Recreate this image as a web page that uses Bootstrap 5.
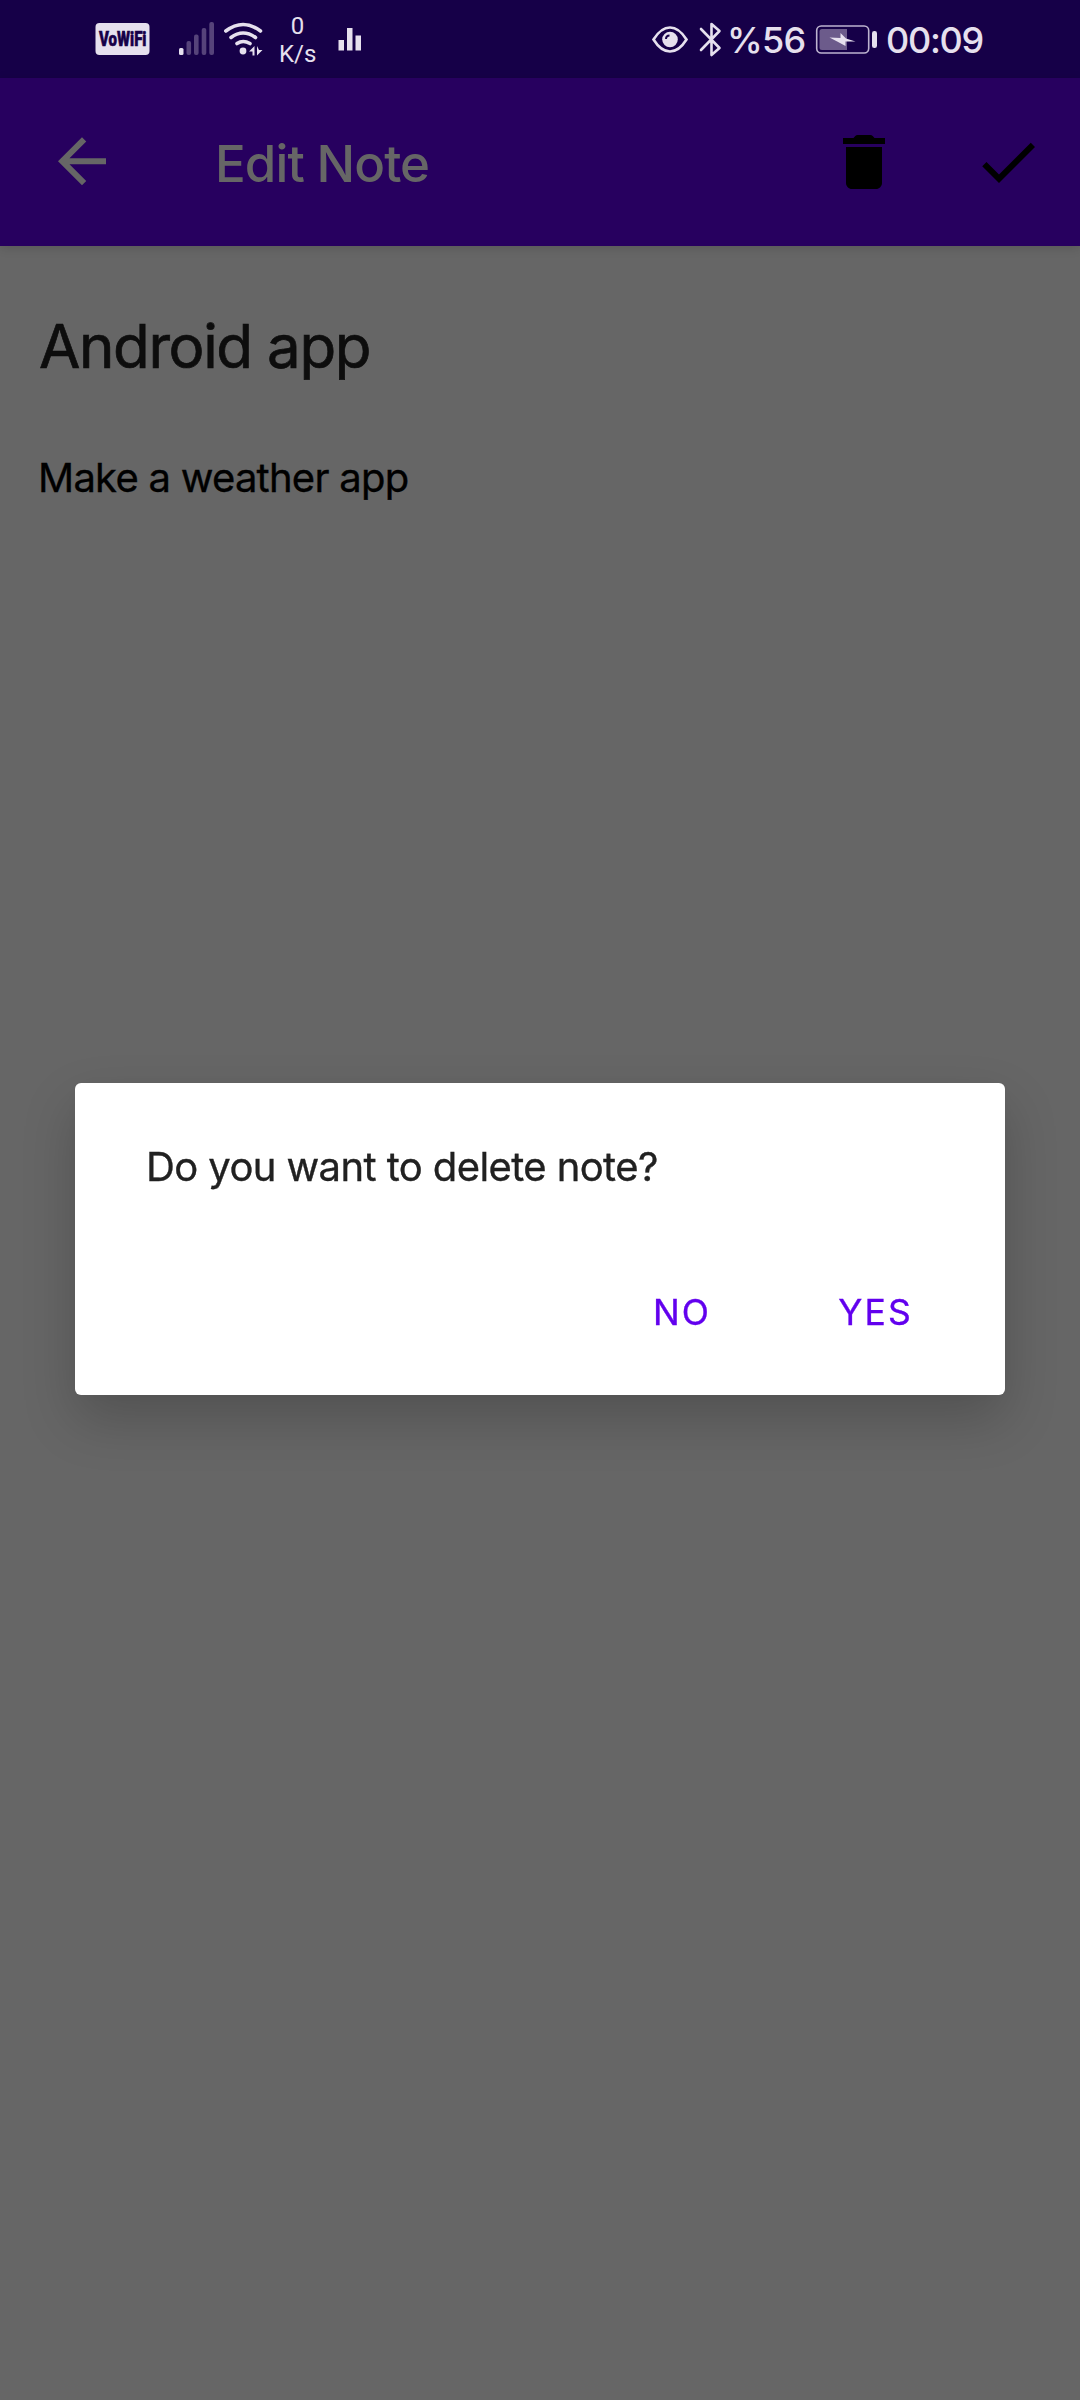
<!DOCTYPE html>
<html lang="en">
<head>
<meta charset="utf-8">
<meta name="viewport" content="width=device-width, initial-scale=1">
<title>Edit Note</title>
<link href="https://cdn.jsdelivr.net/npm/bootstrap@5.3.0/dist/css/bootstrap.min.css" rel="stylesheet">
<style>
  body { font-family: Inter, "Liberation Sans", sans-serif; background: #666; color: #000; height: 2400px; overflow: hidden; }
  .status-bar { height: 78px; background: #160048; color: #e6e0ee; padding: 0 96px 0 95px; }
  .status-bar svg { flex: none; display: block; overflow: visible; }
  .status-text { font-size: 36px; line-height: 78px; white-space: nowrap; font-weight: 500; letter-spacing: -.8px; padding-top: 1px; height: 78px; }
  .battery-level { width: 79px; }
  .clock { width: 98px; letter-spacing: -1.3px; }
  .net-speed { font: 24px/28px Roboto, sans-serif; width: 37px; margin: 2px 4px 0 13px; }
  .app-bar { height: 168px; background: #27005f; box-shadow: 0 2px 10px rgba(0,0,0,.14); padding: 0 36px 0 46px; }
  .app-title { font-size: 51px; line-height: 60px; color: #666; font-weight: 500; letter-spacing: -.9px; margin: 4px 0 0 97px; }
  .icon-btn { width: 72px; height: 72px; border: 0; background: none; color: #000; }
  .bar-actions { gap: 72px; }
  .note-pane { padding: 60px 38px; }
  .note-title { font-size: 60px; line-height: 80px; color: #0d0d0d; margin: 0 0 0 1px; font-weight: 400; letter-spacing: -1.4px; -webkit-text-stroke: .7px #0d0d0d; }
  .note-body { font-size: 40px; line-height: 60px; margin: 62px 0 0; letter-spacing: -.75px; -webkit-text-stroke: .35px #000; }
  .confirm-dialog { --bs-modal-width: 930px; --bs-modal-margin: 0; max-width: 930px; height: 100%; padding-top: 78px; }
  .confirm-dialog .modal-content { height: 312px; border: 0; border-radius: 6px; color: #212121; box-shadow: 0 24px 54px rgba(0,0,0,.2), 0 0 18px rgba(0,0,0,.03); }
  .confirm-text { font-size: 40px; line-height: 60px; padding: 54px 71px 0; letter-spacing: -.6px; -webkit-text-stroke: .35px #212121; }
  .dialog-actions { margin-top: 86px; padding-right: 92px; gap: 127px; }
  .dialog-action, .dialog-action:hover { font-size: 35.5px; line-height: 60px; color: #6200ee; letter-spacing: 2.2px; border: 0; padding: 0; -webkit-text-stroke: .35px #6200ee; }
</style>
</head>
<body>
<header>
  <div class="status-bar d-flex align-items-center justify-content-between">
    <div class="d-flex align-items-center">
      <svg width="55" height="78" viewBox="95 0 55 78"><rect x="95.500" y="23" width="54" height="32" rx="4" fill="#e6e0ee"/><text x="99" y="46" textLength="47.500" lengthAdjust="spacingAndGlyphs" font-family="Roboto, sans-serif" font-weight="900" font-size="20.500" fill="#160048" stroke="#160048" stroke-width=".6">VoWiFi</text></svg>
      <svg width="116" height="78" viewBox="150 0 116 78" fill="#e6e0ee">
        <rect x="179" y="48" width="4.500" height="7" rx="1.500"/>
        <g fill="#56437a"><rect x="186.500" y="41" width="4.600" height="14" rx="2"/><rect x="194" y="34.500" width="4.600" height="20.500" rx="2"/><rect x="201.700" y="28" width="4.600" height="27" rx="2"/><rect x="209.300" y="22" width="4.700" height="33" rx="2"/></g>
        <g fill="none" stroke="#e6e0ee" stroke-width="3.600" stroke-linecap="round"><path d="M225.800 31Q243 18 260.500 31M231 37.500Q243 28.500 255.500 37.500M237 43.500Q243 39.500 250 43.500"/></g>
        <circle cx="243" cy="51" r="3.400"/><path d="M249 51.500l5.500-5.500v9.500h-2v-4zM257 46v9.500l5.500-5.500h-3.500z"/>
      </svg>
      <div class="net-speed text-center"><div>0</div><div>K/s</div></div>
      <svg width="42" height="78" viewBox="320 0 42 78" fill="#e6e0ee"><path d="M338.500 40h5.500v10.500h-5.500zM347 28h5.500v22.500H347zM355.500 35.500h5.500v15h-5.500z"/></svg>
    </div>
    <div class="d-flex align-items-center">
      <svg width="76" height="78" viewBox="651 0 76 78" fill="none" stroke="#e6e0ee">
        <path d="M653.500 39.500Q661 27.500 670 27.500T686.500 39.500Q679 51.500 670 51.500T653.500 39.500z" stroke-width="2.600"/>
        <circle cx="670" cy="39.500" r="7.800" fill="#e6e0ee" stroke="none"/><path d="M666 39q0-3.500 3.500-3.500" stroke="#160048" stroke-width="2"/>
        <path d="M701 29l18.500 19-8 7V24l8 7L701 50" stroke-width="2.600" stroke-linecap="round" stroke-linejoin="round"/>
      </svg>
      <span class="status-text battery-level">%56</span>
      <svg width="80" height="78" viewBox="806 0 80 78"><rect x="816.700" y="26" width="52" height="27" rx="4.500" fill="none" stroke="#bdb3cf" stroke-width="1.600"/><path d="M822 29h25v21h-25q-2.500 0-2.500-2.500v-16Q819.500 29 822 29z" fill="#6c5b8b"/><path d="M829.500 37.500L840.500 38V33L846 38.500L855.500 41.500L845.500 41.500V46L840 43z" fill="#e6e0ee"/><rect x="872" y="31" width="5" height="17" rx="2.300" fill="#e6e0ee"/></svg>
      <span class="status-text clock">00:09</span>
    </div>
  </div>
  <nav class="app-bar d-flex align-items-center">
    <button class="icon-btn p-0" aria-label="Back"><svg width="72" height="72" viewBox="0 0 24 24" fill="#666" class="d-block"><path d="M20 10.750H7.830l5.590-5.590L12 3.750l-8 8 8 8 1.410-1.410L7.830 12.750H20z"/></svg></button>
    <h1 class="app-title">Edit Note</h1>
    <div class="d-flex ms-auto bar-actions">
      <button class="icon-btn p-0" aria-label="Delete"><svg width="72" height="72" viewBox="0 0 24 24" class="d-block"><path d="M6 19c0 1.100.9 2 2 2h8c1.100 0 2-.9 2-2V7H6zM19 4h-3.500l-.6-.7q-.3-.3-.8-.3H9.900q-.5 0-.8.3l-.6.7H5v2h14z"/></svg></button>
      <button class="icon-btn p-0" aria-label="Save"><svg width="72" height="72" viewBox="0 0 24 24" class="d-block"><path d="M9 16.170L4.830 12l-1.420 1.410L9 19 21 7l-1.410-1.410z"/></svg></button>
    </div>
  </nav>
</header>
<main class="note-pane">
  <h2 class="note-title">Android app</h2>
  <p class="note-body">Make a weather app</p>
</main>
<div class="modal d-block" tabindex="-1" role="dialog" aria-modal="true">
  <div class="modal-dialog modal-dialog-centered confirm-dialog">
    <div class="modal-content">
      <div class="confirm-text">Do you want to delete note?</div>
      <div class="d-flex justify-content-end dialog-actions">
        <button class="btn dialog-action">NO</button>
        <button class="btn dialog-action">YES</button>
      </div>
    </div>
  </div>
</div>
<script src="https://cdn.jsdelivr.net/npm/bootstrap@5.3.0/dist/js/bootstrap.bundle.min.js"></script>
</body>
</html>
